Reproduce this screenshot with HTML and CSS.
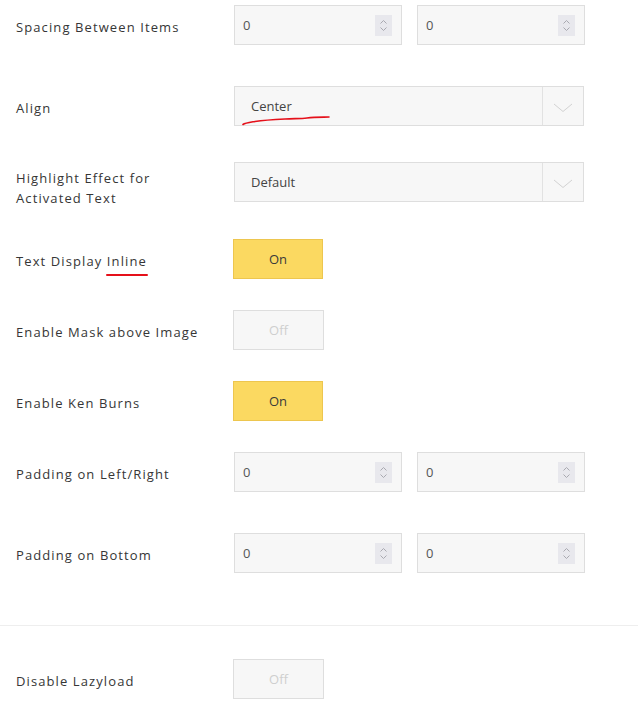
FILE: index.html
```html
<!DOCTYPE html>
<html lang="en">
<head>
<meta charset="utf-8">
<title>Slider Settings</title>
<link rel="stylesheet" href="styles.css">
</head>
<body>
<div class="panel">
  <div class="row row-a">
    <div class="label">Spacing Between Items</div>
    <div class="controls">
      <div class="num"><span class="num-val">0</span><span class="spin"><svg viewBox="0 0 17 21" width="17" height="21"><path d="M5.5 8.5 L8.5 5.5 L11.5 8.5 M5.5 12.5 L8.5 15.5 L11.5 12.5" fill="none" stroke="#a9a9b0" stroke-width="1"/></svg></span></div>
      <div class="num"><span class="num-val">0</span><span class="spin"><svg viewBox="0 0 17 21" width="17" height="21"><path d="M5.5 8.5 L8.5 5.5 L11.5 8.5 M5.5 12.5 L8.5 15.5 L11.5 12.5" fill="none" stroke="#a9a9b0" stroke-width="1"/></svg></span></div>
    </div>
  </div>

  <div class="row row-b">
    <div class="label">Align</div>
    <div class="controls">
      <div class="select">
        <span class="select-val">Center</span>
        <span class="select-arrow"><svg viewBox="0 0 20 10" width="20" height="10"><path d="M1 1 L10 8.5 L19 1" fill="none" stroke="#d2d2d2" stroke-width="1"/></svg></span>
        <svg class="mark mark-center" viewBox="0 0 90 16" width="90" height="16"><path d="M2 13.5 C4 12 8 11.5 14 10.5 C24 9 34 8.5 44 8 C54 7.5 60 7.8 66 7 C74 6 82 6.2 88 6" fill="none" stroke="#e5101a" stroke-width="1.6" stroke-linecap="round"/></svg>
      </div>
    </div>
  </div>

  <div class="row row-c">
    <div class="label label-wrap">Highlight Effect for Activated Text</div>
    <div class="controls">
      <div class="select">
        <span class="select-val">Default</span>
        <span class="select-arrow"><svg viewBox="0 0 20 10" width="20" height="10"><path d="M1 1 L10 8.5 L19 1" fill="none" stroke="#d2d2d2" stroke-width="1"/></svg></span>
      </div>
    </div>
  </div>

  <div class="row row-d">
    <div class="label">Text Display <span class="underlined">Inline</span></div>
    <div class="controls"><div class="toggle on">On</div></div>
  </div>

  <div class="row row-d">
    <div class="label">Enable Mask above Image</div>
    <div class="controls"><div class="toggle off">Off</div></div>
  </div>

  <div class="row row-d">
    <div class="label">Enable Ken Burns</div>
    <div class="controls"><div class="toggle on">On</div></div>
  </div>

  <div class="row row-a">
    <div class="label">Padding on Left/Right</div>
    <div class="controls">
      <div class="num"><span class="num-val">0</span><span class="spin"><svg viewBox="0 0 17 21" width="17" height="21"><path d="M5.5 8.5 L8.5 5.5 L11.5 8.5 M5.5 12.5 L8.5 15.5 L11.5 12.5" fill="none" stroke="#a9a9b0" stroke-width="1"/></svg></span></div>
      <div class="num"><span class="num-val">0</span><span class="spin"><svg viewBox="0 0 17 21" width="17" height="21"><path d="M5.5 8.5 L8.5 5.5 L11.5 8.5 M5.5 12.5 L8.5 15.5 L11.5 12.5" fill="none" stroke="#a9a9b0" stroke-width="1"/></svg></span></div>
    </div>
  </div>

  <div class="row row-e">
    <div class="label">Padding on Bottom</div>
    <div class="controls">
      <div class="num"><span class="num-val">0</span><span class="spin"><svg viewBox="0 0 17 21" width="17" height="21"><path d="M5.5 8.5 L8.5 5.5 L11.5 8.5 M5.5 12.5 L8.5 15.5 L11.5 12.5" fill="none" stroke="#a9a9b0" stroke-width="1"/></svg></span></div>
      <div class="num"><span class="num-val">0</span><span class="spin"><svg viewBox="0 0 17 21" width="17" height="21"><path d="M5.5 8.5 L8.5 5.5 L11.5 8.5 M5.5 12.5 L8.5 15.5 L11.5 12.5" fill="none" stroke="#a9a9b0" stroke-width="1"/></svg></span></div>
    </div>
  </div>
</div>

<hr class="sep">

<div class="panel panel-bottom">
  <div class="row">
    <div class="label">Disable Lazyload</div>
    <div class="controls"><div class="toggle off">Off</div></div>
  </div>
</div>
</body>
</html>
```

FILE: styles.css
```css
* { box-sizing: border-box; }

html, body {
  margin: 0;
  padding: 0;
  background: #ffffff;
}

body {
  font-family: "Open Sans", "Noto Sans", sans-serif;
  font-size: 13px;
  color: #333333;
  width: 638px;
  height: 717px;
  overflow: hidden;
}

.panel {
  padding: 5px 0 0 16px;
}

.row {
  display: flex;
  align-items: center;
}

.row-a { margin-bottom: 41px; }
.row-b { margin-bottom: 36px; }
.row-c { margin-bottom: 37px; }
.row-d { margin-bottom: 31px; }
.row-e { margin-bottom: 0; }

.label {
  width: 218px;
  flex: none;
  padding-right: 26px;
  padding-top: 3px;
  font-size: 13px;
  letter-spacing: 1.1px;
  line-height: 20px;
  color: #363636;
}

/* two-line label sits a little low, hanging under the field */
.label-wrap {
  padding-top: 0;
  margin: 6px 0 -6px;
}

.underlined {
  position: relative;
}

.underlined::after {
  content: "";
  position: absolute;
  left: -1px;
  right: -1px;
  bottom: -6px;
  height: 2px;
  background: #e5101a;
  border-radius: 1px;
}

.controls {
  display: flex;
  gap: 15px;
}

/* number field with spinner */
.num {
  width: 168px;
  height: 40px;
  border: 1px solid #dedede;
  background: #f7f7f7;
  display: flex;
  align-items: center;
  justify-content: space-between;
  padding: 0 9px 0 8px;
}

.num-val {
  color: #555555;
  font-size: 13px;
}

.spin {
  width: 17px;
  height: 21px;
  background: #e8e8ed;
  display: flex;
}

/* dropdown */
.select {
  position: relative;
  width: 350px;
  height: 40px;
  border: 1px solid #dedede;
  background: #f7f7f7;
  display: flex;
  align-items: center;
}

.select-val {
  flex: 1;
  padding-left: 16px;
  color: #444444;
  font-size: 13px;
}

.select-arrow {
  width: 41px;
  height: 100%;
  border-left: 1px solid #e2e2e2;
  display: flex;
  align-items: center;
  justify-content: center;
  padding-top: 3px;
}

.mark {
  position: absolute;
  left: 6px;
  top: 24px;
}

/* on/off switch */
.toggle {
  width: 91px;
  height: 40px;
  margin-left: -1px;
  display: flex;
  align-items: center;
  justify-content: center;
  font-size: 13px;
}

.toggle.on {
  background: #fbd961;
  border: 1px solid #edc64f;
  color: #3a3a3a;
  width: 90px;
}

.toggle.off {
  background: #f7f7f7;
  border: 1px solid #dedede;
  color: #cfcfcf;
}

.sep {
  margin: 52px 0 0 0;
  border: 0;
  border-top: 1px solid #eeeeee;
  height: 0;
}

.panel-bottom {
  padding-top: 33px;
}
```
